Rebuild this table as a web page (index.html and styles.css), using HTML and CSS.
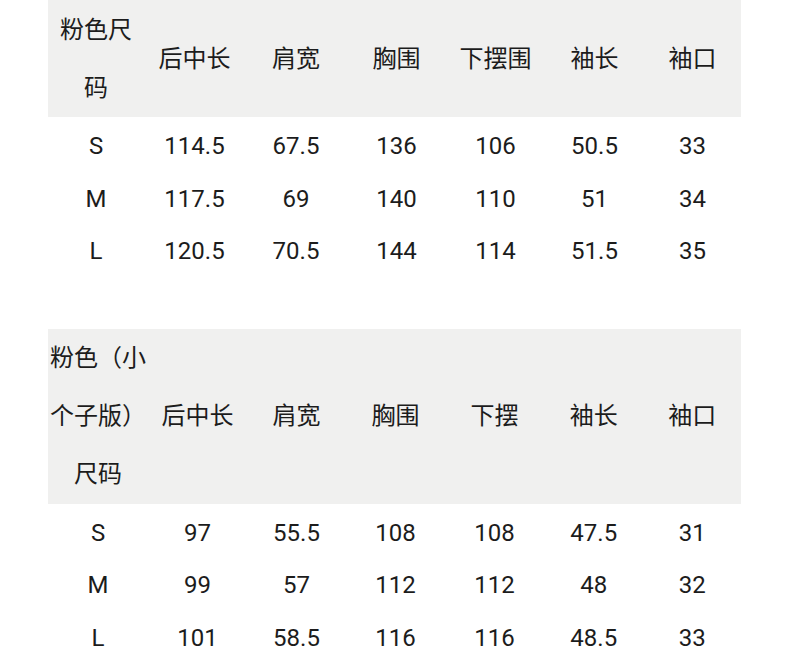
FILE: index.html
```html
<!DOCTYPE html>
<html lang="zh-CN">
<head>
<meta charset="utf-8">
<title>尺码表</title>
<link rel="stylesheet" href="styles.css">
</head>
<body>
<main class="page">
  <section class="size-table size-table--regular">
    <div class="row head">
      <div class="cell first">粉色尺码</div>
      <div class="cell">后中长</div>
      <div class="cell">肩宽</div>
      <div class="cell">胸围</div>
      <div class="cell">下摆围</div>
      <div class="cell">袖长</div>
      <div class="cell">袖口</div>
    </div>
    <div class="row">
      <div class="cell">S</div><div class="cell">114.5</div><div class="cell">67.5</div><div class="cell">136</div><div class="cell">106</div><div class="cell">50.5</div><div class="cell">33</div>
    </div>
    <div class="row">
      <div class="cell">M</div><div class="cell">117.5</div><div class="cell">69</div><div class="cell">140</div><div class="cell">110</div><div class="cell">51</div><div class="cell">34</div>
    </div>
    <div class="row">
      <div class="cell">L</div><div class="cell">120.5</div><div class="cell">70.5</div><div class="cell">144</div><div class="cell">114</div><div class="cell">51.5</div><div class="cell">35</div>
    </div>
  </section>

  <section class="size-table size-table--petite">
    <div class="row head">
      <div class="cell first">粉色（小个子版）尺码</div>
      <div class="cell">后中长</div>
      <div class="cell">肩宽</div>
      <div class="cell">胸围</div>
      <div class="cell">下摆</div>
      <div class="cell">袖长</div>
      <div class="cell">袖口</div>
    </div>
    <div class="row">
      <div class="cell">S</div><div class="cell">97</div><div class="cell">55.5</div><div class="cell">108</div><div class="cell">108</div><div class="cell">47.5</div><div class="cell">31</div>
    </div>
    <div class="row">
      <div class="cell">M</div><div class="cell">99</div><div class="cell">57</div><div class="cell">112</div><div class="cell">112</div><div class="cell">48</div><div class="cell">32</div>
    </div>
    <div class="row">
      <div class="cell">L</div><div class="cell">101</div><div class="cell">58.5</div><div class="cell">116</div><div class="cell">116</div><div class="cell">48.5</div><div class="cell">33</div>
    </div>
  </section>
</main>
</body>
</html>
```

FILE: styles.css
```css
html, body {
  margin: 0;
  padding: 0;
  background: #ffffff;
}

.page {
  width: 693px;
  margin-left: 48px;
  display: flex;
  flex-direction: column;
  gap: 54px;
  font-family: Roboto, "Noto Sans CJK SC", sans-serif;
  font-size: 24px;
  color: #1c1c1c;
}

.size-table {
  display: flex;
  flex-direction: column;
}

.row {
  display: grid;
  align-items: center;
  height: 52.5px;
  line-height: 52.5px;
}

.size-table--regular .row {
  grid-template-columns: 96px 101px 102px 99px 99px 99px 97px;
}

.size-table--petite .row {
  grid-template-columns: 100px 99px 99px 99px 99px 99.5px 97.5px;
}

.row.head {
  background: #f0f0ef;
  height: auto;
  line-height: 58px;
}

.size-table--regular .row.head {
  height: 117px;
}

.size-table--petite .row.head {
  height: 175px;
}

.cell {
  text-align: center;
  padding-top: 3px;
}

.head .cell {
  padding-top: 0;
}

.size-table--regular .head .first {
  padding: 0 2px;
}
```
